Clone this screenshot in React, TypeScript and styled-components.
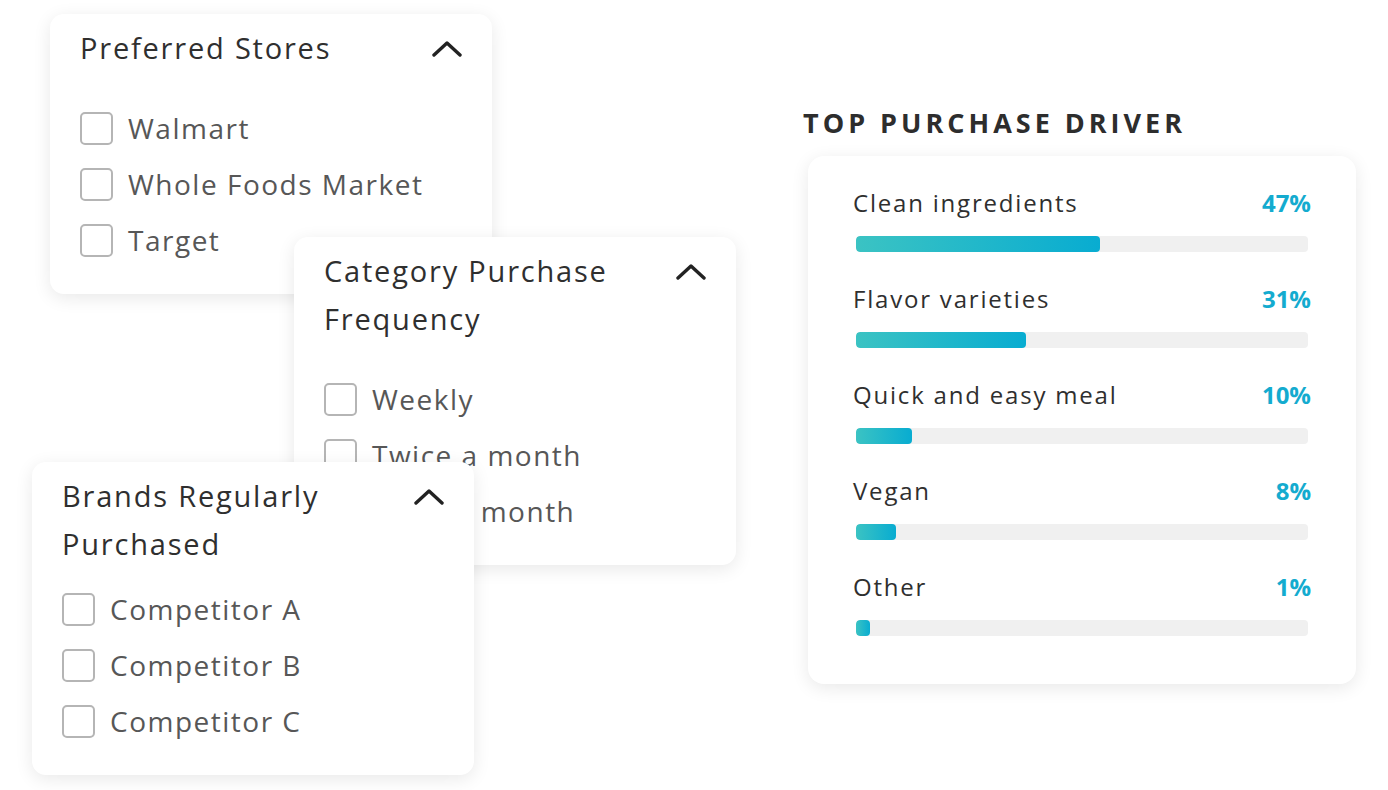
import React from "react";
import styled, { createGlobalStyle } from "styled-components";

const GlobalStyle = createGlobalStyle`
    html, body {
        margin: 0;
        padding: 0;
        background: #ffffff;
    }
    body {
        font-family: "Open Sans", "Lato", sans-serif;
        -webkit-font-smoothing: antialiased;
    }
`;

const Page = styled.div`
    width: 1388px;
    height: 790px;
    display: flex;
    overflow: hidden;
`;

const FilterStack = styled.div`
    position: relative;
    width: 795px;
    height: 100%;
    flex-shrink: 0;
`;

const FilterCard = styled.div<{ $left: number; $top: number; $z: number }>`
    position: absolute;
    left: ${(p) => p.$left}px;
    top: ${(p) => p.$top}px;
    z-index: ${(p) => p.$z};
    width: 442px;
    box-sizing: border-box;
    padding: 10px 30px 26px 30px;
    background: #fff;
    border-radius: 14px;
    box-shadow: 0 4px 18px rgba(0, 0, 0, 0.09);
`;

const CardHeader = styled.div<{ $gap: number }>`
    display: flex;
    justify-content: space-between;
    align-items: flex-start;
    margin-bottom: ${(p) => p.$gap}px;
`;

const CardTitle = styled.div`
    font-size: 29px;
    line-height: 48px;
    color: #2f2f2f;
    letter-spacing: 1.8px;
    max-width: 330px;
`;

const Chevron = styled.svg`
    width: 30px;
    height: 18px;
    margin-top: 16px;
    flex-shrink: 0;
`;

const OptionList = styled.div`
    display: flex;
    flex-direction: column;
`;

const Option = styled.label`
    display: flex;
    align-items: center;
    height: 56px;
    gap: 15px;
    font-size: 28px;
    color: #575757;
    letter-spacing: 1.5px;
    white-space: nowrap;
`;

const Box = styled.span`
    width: 33px;
    height: 33px;
    box-sizing: border-box;
    border: 2px solid #b5b5b5;
    border-radius: 5px;
    flex-shrink: 0;
`;

const DriverSection = styled.div`
    padding-top: 106px;
    padding-left: 8px;
`;

const Heading = styled.h2`
    margin: 0 0 16px 0;
    font-family: "Open Sans", sans-serif;
    font-weight: 700;
    font-size: 27px;
    line-height: 34px;
    letter-spacing: 4px;
    color: #2d2d2d;
`;

const DriverCard = styled.div`
    margin-left: 5px;
    width: 548px;
    box-sizing: border-box;
    padding: 30px 48px 48px 45px;
    background: #fff;
    border-radius: 16px;
    box-shadow: 0 4px 18px rgba(0, 0, 0, 0.09);
    display: flex;
    flex-direction: column;
    gap: 30px;
`;

const DriverRow = styled.div`
    display: flex;
    flex-direction: column;
    gap: 18px;
`;

const DriverTop = styled.div`
    display: flex;
    justify-content: space-between;
    align-items: center;
    height: 32px;
`;

const DriverLabel = styled.span`
    font-size: 24px;
    color: #2f2f2f;
    letter-spacing: 1.8px;
`;

const DriverValue = styled.span`
    font-size: 24px;
    font-weight: 700;
    color: #14abcf;
    margin-right: -3px;
`;

const Track = styled.div`
    margin-left: 3px;
    height: 16px;
    border-radius: 4px;
    background: #f0f0f0;
    overflow: hidden;
`;

const Fill = styled.div`
    height: 100%;
    border-radius: 4px;
    background: linear-gradient(90deg, #3bc3c3 0%, #08acd1 100%);
`;

const ChevronUp = () => (
    <Chevron viewBox="0 0 30 18">
        <polyline
            points="2,15 15,3 28,15"
            fill="none"
            stroke="#222"
            strokeWidth="3.4"
            strokeLinecap="round"
            strokeLinejoin="round"
        />
    </Chevron>
);

type FilterProps = {
    title: string;
    options: string[];
    left: number;
    top: number;
    z: number;
    gap: number;
};

const Filter = ({ title, options, left, top, z, gap }: FilterProps) => (
    <FilterCard $left={left} $top={top} $z={z}>
        <CardHeader $gap={gap}>
            <CardTitle>{title}</CardTitle>
            <ChevronUp />
        </CardHeader>
        <OptionList>
            {options.map((o) => (
                <Option key={o}>
                    <Box />
                    {o}
                </Option>
            ))}
        </OptionList>
    </FilterCard>
);

const drivers = [
    { label: "Clean ingredients", value: "47%", width: 244 },
    { label: "Flavor varieties", value: "31%", width: 170 },
    { label: "Quick and easy meal", value: "10%", width: 56 },
    { label: "Vegan", value: "8%", width: 40 },
    { label: "Other", value: "1%", width: 14 },
];

const App = () => {
    return (
        <>
            <GlobalStyle />
            <Page>
                <FilterStack>
                    <Filter
                        title="Preferred Stores"
                        options={["Walmart", "Whole Foods Market", "Target"]}
                        left={50}
                        top={14}
                        z={1}
                        gap={28}
                    />
                    <Filter
                        title="Category Purchase Frequency"
                        options={["Weekly", "Twice a month", "Once a month"]}
                        left={294}
                        top={237}
                        z={2}
                        gap={28}
                    />
                    <Filter
                        title="Brands Regularly Purchased"
                        options={["Competitor A", "Competitor B", "Competitor C"]}
                        left={32}
                        top={462}
                        z={3}
                        gap={13}
                    />
                </FilterStack>
                <DriverSection>
                    <Heading>TOP PURCHASE DRIVER</Heading>
                    <DriverCard>
                        {drivers.map((d) => (
                            <DriverRow key={d.label}>
                                <DriverTop>
                                    <DriverLabel>{d.label}</DriverLabel>
                                    <DriverValue>{d.value}</DriverValue>
                                </DriverTop>
                                <Track>
                                    <Fill style={{ width: d.width }} />
                                </Track>
                            </DriverRow>
                        ))}
                    </DriverCard>
                </DriverSection>
            </Page>
        </>
    );
};

export default App;
